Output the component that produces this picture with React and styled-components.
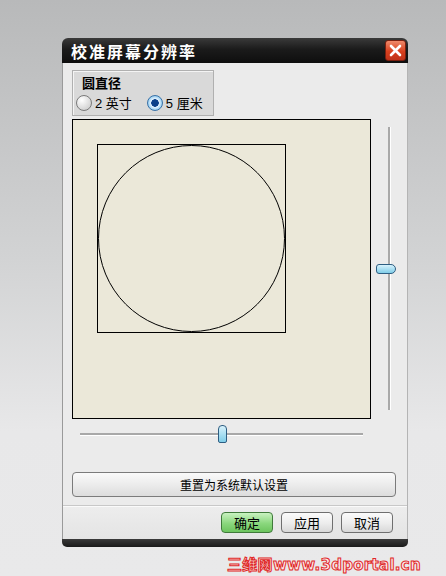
import React from 'react'
import styled, { createGlobalStyle } from 'styled-components'

const Global = createGlobalStyle`
  html, body { margin: 0; padding: 0; }
  body {
    width: 446px;
    height: 576px;
    overflow: hidden;
    background: linear-gradient(#b8b9ba 0%, #d2d3d4 45%, #e8e8e9 75%, #e9e9ea 100%);
    font-family: "Liberation Sans", "Noto Sans CJK SC", sans-serif;
    font-size: 12px;
    color: #000;
  }
`

const Page = styled.div`
  display: flex;
  flex-direction: column;
  align-items: flex-start;
  padding: 38px 0 0 62px;
`

const Window = styled.div`
  width: 346px;
  display: flex;
  flex-direction: column;
`

const TitleBar = styled.div`
  height: 25px;
  background: linear-gradient(#3a3a3a 0%, #1b1b1b 45%, #0e0e0e 100%);
  border-radius: 6px 6px 0 0;
  display: flex;
  align-items: center;
  justify-content: space-between;
  padding: 0 2px 0 9px;
`

const Title = styled.span`
  color: #fff;
  font-family: "Noto Sans CJK SC", sans-serif;
  font-weight: 700;
  font-size: 16px;
  letter-spacing: 2px;
`

const Close = styled.div`
  width: 19px;
  height: 19px;
  border-radius: 3px;
  background: linear-gradient(#f08a6a, #d8401e 55%, #c0321a);
  border: 1px solid #7a2010;
  display: flex;
  align-items: center;
  justify-content: center;
`

const Body = styled.div`
  background: #ebebeb;
  border-left: 1px solid #9a9a9a;
  border-right: 1px solid #b4b4b4;
  padding: 7px 0 0 9px;
  display: flex;
  flex-direction: column;
`

const Group = styled.div`
  width: 142px;
  height: 46px;
  background: #d9d9d9;
  border: 1px solid #b0b0b0;
  box-shadow: inset 1px 1px 0 #f4f4f4;
  padding: 3px 0 0 3px;
  box-sizing: border-box;
`

const GroupTitle = styled.div`
  font-family: "Noto Sans CJK SC", sans-serif;
  font-weight: 700;
  font-size: 13px;
  line-height: 17px;
  padding-left: 6px;
`

const Radios = styled.div`
  display: flex;
  gap: 15px;
  margin-top: 2px;
`

const RadioItem = styled.label`
  display: flex;
  align-items: center;
  gap: 3px;
  font-size: 13px;
  font-family: "Liberation Sans", "Noto Sans CJK SC", sans-serif;
`

const RadioDot = styled.span`
  width: 16px;
  height: 16px;
  border-radius: 50%;
  box-sizing: border-box;
  border: 1px solid ${p => (p.$on ? '#3a72a8' : '#7a7a7a')};
  background: ${p => (p.$on
    ? 'radial-gradient(circle, #0a3f8a 0 3.5px, #e8f4ff 4px, #7fc2ec 8px)'
    : 'radial-gradient(circle at 35% 30%, #ffffff, #d0d0d0 80%)')};
`

const Middle = styled.div`
  display: flex;
  margin-top: 3px;
`

const Canvas = styled.div`
  width: 300px;
  height: 300px;
  box-sizing: border-box;
  background: #ebe8d9;
  border: 1px solid #000;
  padding: 24px 0 0 24px;
`

const Square = styled.div`
  width: 189px;
  height: 189px;
  box-sizing: border-box;
  border: 1px solid #000;
`

const VTrackWrap = styled.div`
  position: relative;
  width: 36px;
  display: flex;
  justify-content: center;
  padding-top: 8px;
  padding-bottom: 8px;
  box-sizing: border-box;
`

const VTrack = styled.div`
  width: 2px;
  height: 283px;
  background: #a8a8a8;
  border-right: 1px solid #fff;
`

const VThumb = styled.div`
  position: absolute;
  left: 5px;
  top: 145px;
  width: 18px;
  height: 8px;
  border: 1px solid #2e5e82;
  border-radius: 3px 5px 5px 3px;
  background: linear-gradient(#d8f2fc, #7fcde8);
`

const HTrackWrap = styled.div`
  position: relative;
  height: 30px;
  padding: 0 0 0 8px;
  display: flex;
  align-items: center;
`

const HTrack = styled.div`
  width: 283px;
  height: 2px;
  background: #a8a8a8;
  border-bottom: 1px solid #fff;
`

const HThumb = styled.div`
  position: absolute;
  left: 146px;
  top: 6px;
  width: 7px;
  height: 16px;
  border: 1px solid #2e5e82;
  border-radius: 4px 4px 2px 2px;
  background: linear-gradient(#d8f2fc, #7fcde8);
`

const ResetButton = styled.button`
  margin-top: 23px;
  width: 324px;
  height: 25px;
  border: 1px solid #7b7b7b;
  border-radius: 4px;
  background: linear-gradient(#fafafa 0%, #ececec 50%, #dcdcdc 100%);
  font-family: "Noto Sans CJK SC", sans-serif;
  font-size: 12px;
  color: #000;
  padding: 0;
`

const Footer = styled.div`
  margin: 8px 0 0 -9px;
  border-top: 1px solid #c8c8c8;
  box-shadow: inset 0 1px 0 #fafafa;
  background: linear-gradient(#ededed, #e4e4e4);
  display: flex;
  justify-content: flex-end;
  gap: 8px;
  padding: 6px 14px 6px 0;
`

const Btn = styled.button`
  width: 52px;
  height: 21px;
  padding: 0;
  border: 1px solid ${p => (p.$primary ? '#3f7a3a' : '#6f6f6f')};
  border-radius: 4px;
  background: ${p => (p.$primary
    ? 'linear-gradient(#c9f2c0, #8ad77d 55%, #6cc45e)'
    : 'linear-gradient(#fbfbfb, #ececec 55%, #d8d8d8)')};
  font-family: "Noto Sans CJK SC", sans-serif;
  font-size: 13px;
  color: #000;
`

const BottomEdge = styled.div`
  height: 8px;
  background: linear-gradient(#3a3a3a, #1a1a1a);
  border-radius: 0 0 5px 5px;
`

const Watermark = styled.div`
  margin: 8px 0 0 165px;
  font-family: "DejaVu Sans", "Noto Sans CJK SC", sans-serif;
  font-weight: 700;
  font-size: 15px;
  letter-spacing: 0.3px;
  line-height: 20px;
  color: #fde8e8;
  -webkit-text-stroke: 1px #e02828;
  white-space: nowrap;
`

export default function App() {
  return (
    <>
      <Global />
      <Page>
        <Window>
          <TitleBar>
            <Title>校准屏幕分辨率</Title>
            <Close>
              <svg width="13" height="13" viewBox="0 0 13 13">
                <path d="M2 2 L11 11 M11 2 L2 11" stroke="#fff" strokeWidth="2.6" strokeLinecap="round" />
              </svg>
            </Close>
          </TitleBar>
          <Body>
            <Group>
              <GroupTitle>圆直径</GroupTitle>
              <Radios>
                <RadioItem><RadioDot />2 英寸</RadioItem>
                <RadioItem><RadioDot $on />5 厘米</RadioItem>
              </Radios>
            </Group>
            <Middle>
              <Canvas>
                <Square>
                  <svg width="187" height="187" viewBox="0 0 187 187">
                    <circle cx="93.5" cy="93.5" r="93" fill="none" stroke="#000" strokeWidth="1" />
                  </svg>
                </Square>
              </Canvas>
              <VTrackWrap>
                <VTrack />
                <VThumb />
              </VTrackWrap>
            </Middle>
            <HTrackWrap>
              <HTrack />
              <HThumb />
            </HTrackWrap>
            <ResetButton>重置为系统默认设置</ResetButton>
            <Footer>
              <Btn $primary>确定</Btn>
              <Btn>应用</Btn>
              <Btn>取消</Btn>
            </Footer>
          </Body>
          <BottomEdge />
        </Window>
        <Watermark>三维网www.3dportal.cn</Watermark>
      </Page>
    </>
  )
}
